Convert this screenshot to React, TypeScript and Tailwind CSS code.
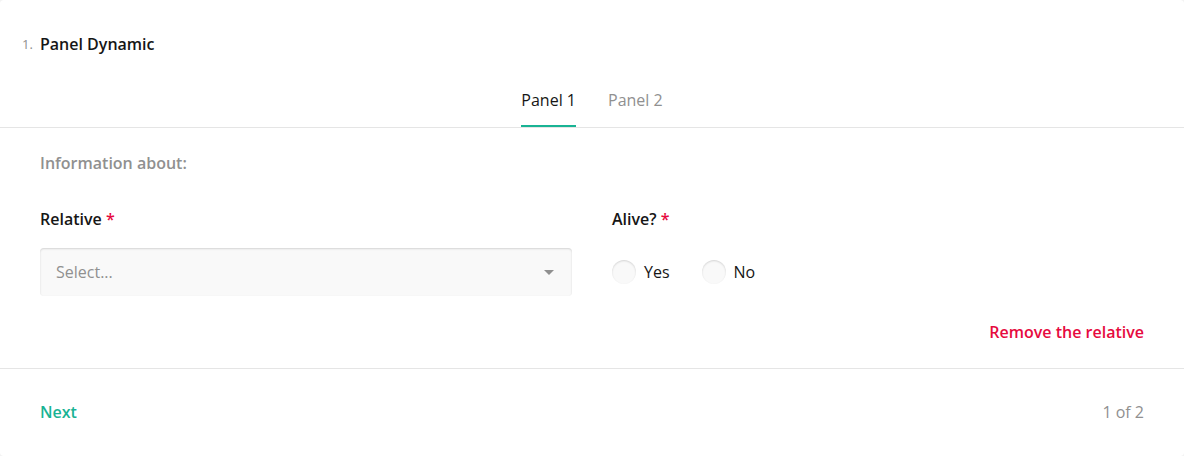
import React from 'react';

const font = { fontFamily: '"Open Sans", "Liberation Sans", sans-serif' };

function Radio({ label }: { label: string }) {
  return (
    <label className="flex items-center gap-2 cursor-pointer">
      <span className="w-6 h-6 rounded-full bg-[#f9f9f9] shadow-[inset_0_1px_2px_rgba(0,0,0,0.15)]" />
      <span className="text-base leading-6 text-[#161616]">{label}</span>
    </label>
  );
}

export default function App() {
  return (
    <div className="w-[1184px] h-[456px] bg-[#f3f3f3]" style={font}>
      <div className="w-full h-full bg-white rounded-[4px] flex flex-col">
        {/* 标题 */}
        <div className="relative px-10 pt-8">
          <span className="absolute left-[22px] top-[36px] text-[13px] leading-4 text-[#909090]">1.</span>
          <h3 className="text-base leading-6 font-semibold text-[#161616]">Panel Dynamic</h3>
        </div>

        {/* 标签页 */}
        <div className="mt-6 flex justify-center gap-8 border-b border-[#e5e5e5]">
          <div className="pt-2 pb-[13px] border-b-2 border-[#19b394] text-base leading-6 text-[#161616]">Panel 1</div>
          <div className="pt-2 pb-[15px] text-base leading-6 text-[#909090]">Panel 2</div>
        </div>

        {/* 面板内容 */}
        <div className="px-10 pt-[23px] pb-6 border-b border-[#e5e5e5]">
          <div className="text-base leading-6 font-semibold text-[#909090]">Information about:</div>
          <div className="mt-8 grid grid-cols-2 gap-10">
            <div>
              <div className="text-base leading-6 font-semibold text-[#161616]">
                Relative <span className="text-[#e60a3e]">*</span>
              </div>
              <div className="mt-[17px] h-12 rounded-[4px] bg-[#f9f9f9] shadow-[inset_0_1px_2px_rgba(0,0,0,0.15)] flex items-center justify-between pl-4 pr-[18px]">
                <span className="text-base text-[#909090]">Select...</span>
                <svg width="10" height="5" viewBox="0 0 10 5">
                  <path d="M0 0h10L5 5z" fill="#909090" />
                </svg>
              </div>
            </div>
            <div>
              <div className="text-base leading-6 font-semibold text-[#161616]">
                Alive? <span className="text-[#e60a3e]">*</span>
              </div>
              <div className="mt-[29px] flex items-center gap-8">
                <Radio label="Yes" />
                <Radio label="No" />
              </div>
            </div>
          </div>
          <div className="mt-6 flex justify-end">
            <span className="text-base leading-6 font-semibold text-[#e60a3e]">Remove the relative</span>
          </div>
        </div>

        {/* 底部导航 */}
        <div className="px-10 pt-[31px] flex items-center justify-between">
          <span className="text-base leading-6 font-semibold text-[#19b394]">Next</span>
          <span className="text-base leading-6 text-[#909090]">1 of 2</span>
        </div>
      </div>
    </div>
  );
}
